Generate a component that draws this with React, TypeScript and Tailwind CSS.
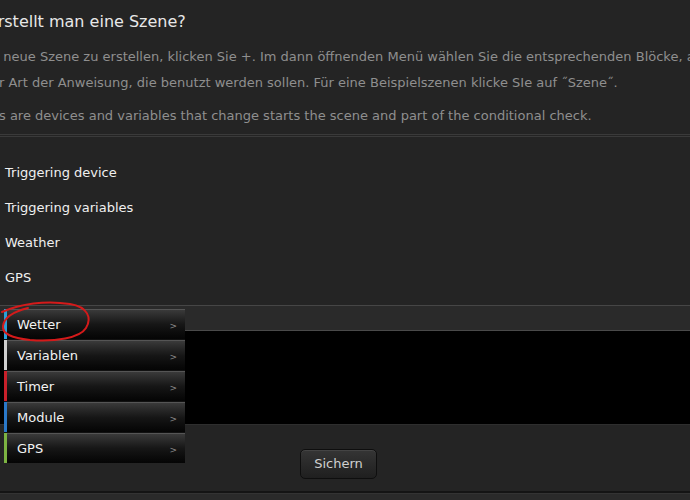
const triggers = ["Triggering device", "Triggering variables", "Weather", "GPS"];

const menu = [
  { label: "Wetter", bar: "bg-[#2aa0d8]" },
  { label: "Variablen", bar: "bg-[#cfcfcf]" },
  { label: "Timer", bar: "bg-[#c8202a]" },
  { label: "Module", bar: "bg-[#2a78c8]" },
  { label: "GPS", bar: "bg-[#7cb342]" },
];

export default function App() {
  return (
    <div className="relative w-[690px] h-[500px] overflow-hidden bg-[#242424] font-['DejaVu_Sans',sans-serif]">
      <div className="pt-[11px] whitespace-nowrap">
        <h2 className="text-[16px] text-[#e8e8e8] -ml-[47px] leading-[22px]">
          Wie erstellt man eine Szene?
        </h2>
        <div className="mt-[11px] text-[13px] leading-[26px] text-[#8f8f8f]">
          <p className="-ml-[55px]">Um eine neue Szene zu erstellen, klicken Sie +. Im dann öffnenden Menü wählen Sie die entsprechenden Blöcke, aus</p>
          <p className="-ml-[1px]">r Art der Anweisung, die benutzt werden sollen. Für eine Beispielszenen klicke SIe auf ˝Szene˝.</p>
          <p className="mt-[7px] -ml-[1px]">s are devices and variables that change starts the scene and part of the conditional check.</p>
        </div>
      </div>
      <div className="mt-[5px] h-[3px] border-t border-b border-[#3a3a3a]" />

      <div className="pt-[27px] pl-[5px] flex flex-col gap-[17px] text-[13px] leading-[18px] text-[#f0f0f0]">
        {triggers.map((t) => (
          <div key={t}>{t}</div>
        ))}
      </div>

      <div className="mt-[18px] border-t border-[#464646] h-[25px] bg-[#2a2a2a]" />
      <div className="border-t border-[#4a4a4a] h-[94px] bg-black" />
      <div className="h-[67px] flex items-center pl-[300px] border-t border-[#2e2e2e]">
        <button className="w-[77px] h-[30px] rounded-[5px] border border-[#0e0e0e] bg-gradient-to-b from-[#353535] to-[#1f1f1f] text-[13px] text-[#d0d0d0] shadow-[inset_0_1px_0_#444] mt-[12px]">
          Sichern
        </button>
      </div>
      <div className="h-[2px] bg-[#141414]" />
      <div className="h-[8px] bg-[#2a2a2a] border-t border-[#333]" />

      <div className="absolute left-[4px] top-[309px] w-[181px] flex flex-col gap-[1px] bg-[#111]">
        {menu.map((m) => (
          <div key={m.label} className="flex h-[30px]">
            <div className={`w-[3px] ${m.bar}`} />
            <div className="flex-1 flex items-center justify-between pl-[10px] pr-[8px] bg-gradient-to-b from-[#3a3a3a] via-[#161616] to-[#050505] border-t border-[#555]">
              <span className="text-[13px] text-[#f2f2f2]">{m.label}</span>
              <span className="text-[9px] text-[#8a8a8a] mt-[4px]">&gt;</span>
            </div>
          </div>
        ))}
      </div>

      <svg className="absolute left-0 top-[296px]" width="100" height="52" viewBox="0 0 100 52">
        <path
          d="M2 16 C 20 8, 45 4, 70 8 C 88 11, 92 22, 86 32 C 80 42, 55 46, 30 44 C 12 42, 2 38, 3 30 C 4 22, 12 16, 28 12"
          fill="none"
          stroke="#d41a1a"
          strokeWidth="2"
          strokeLinecap="round"
        />
      </svg>
    </div>
  );
}
